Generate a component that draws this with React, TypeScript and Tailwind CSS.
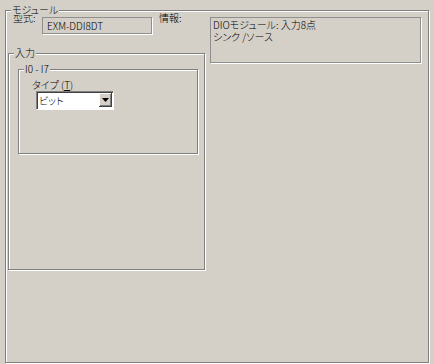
import type { ReactNode } from 'react'

function GroupBox({ label, className, children }: { label: string; className: string; children?: ReactNode }) {
    return (
        <div className={`relative border border-[#808080] shadow-[inset_1px_1px_0_#fff,1px_1px_0_#fff] ${className}`}>
            <span className="absolute -top-[6px] left-[5px] bg-[#d4d0c8] px-[1px] leading-[10px] whitespace-nowrap">
                {label}
            </span>
            {children}
        </div>
    )
}

export default function App() {
    return (
        <div className="w-[434px] h-[364px] bg-[#d4d0c8] pt-[10px] px-[5px] text-[10px] leading-[12px] font-light text-black font-['Noto_Sans_CJK_JP',sans-serif] [font-feature-settings:'palt']">
            <GroupBox label="モジュール" className="w-[424px] h-[353px]">
                <div className="grid grid-cols-[197px_211px] gap-x-[5px] pl-[2px]">
                    {/* left column */}
                    <div>
                        <div className="flex items-start pt-[2px] pl-[5px]">
                            <span className="w-[29px] leading-[10px] whitespace-nowrap">型式:</span>
                            <div className="mt-[4px] w-[110px] h-[17px] flex items-center pl-[4px] border border-[#8f8f8f] shadow-[1px_1px_0_#fff] whitespace-nowrap">
                                EXM-DDI8DT
                            </div>
                            <span className="ml-[7px] leading-[10px] whitespace-nowrap">情報:</span>
                        </div>

                        <GroupBox label="入力" className="mt-[19px] h-[217px]">
                            <div className="pt-[15px] pl-[9px]">
                                <GroupBox label="I0 - I7" className="w-[180px] h-[85px]">
                                    <div className="pt-[9px] pl-[13px]">
                                        <div className="whitespace-nowrap">
                                            タイプ (<span className="underline">T</span>)
                                        </div>
                                        <div className="ml-[4px] w-[77px] h-[18px] flex bg-white border-t border-l border-[#808080] shadow-[1px_1px_0_#fff,inset_1px_1px_0_#404040]">
                                            <span className="flex-1 pl-[2px] pt-[3px] whitespace-nowrap">ビット</span>
                                            <div className="w-[13px] h-[14px] mt-[1px] mr-[1px] bg-[#d4d0c8] border-r border-b border-[#404040] shadow-[inset_1px_1px_0_#fff,inset_-1px_-1px_0_#808080] flex items-center justify-center">
                                                <svg width="7" height="4" viewBox="0 0 7 4">
                                                    <path d="M0 0h7L3.5 4z" fill="#000" />
                                                </svg>
                                            </div>
                                        </div>
                                    </div>
                                </GroupBox>
                            </div>
                        </GroupBox>
                    </div>

                    {/* right column */}
                    <div className="mt-[6px] h-[46px] pl-[2px] pt-[1px] leading-[12px] border border-[#8f8f8f] shadow-[1px_1px_0_#fff]">
                        <div>DIOモジュール: 入力8点</div>
                        <div>シンク /ソース</div>
                    </div>
                </div>
            </GroupBox>
        </div>
    )
}
